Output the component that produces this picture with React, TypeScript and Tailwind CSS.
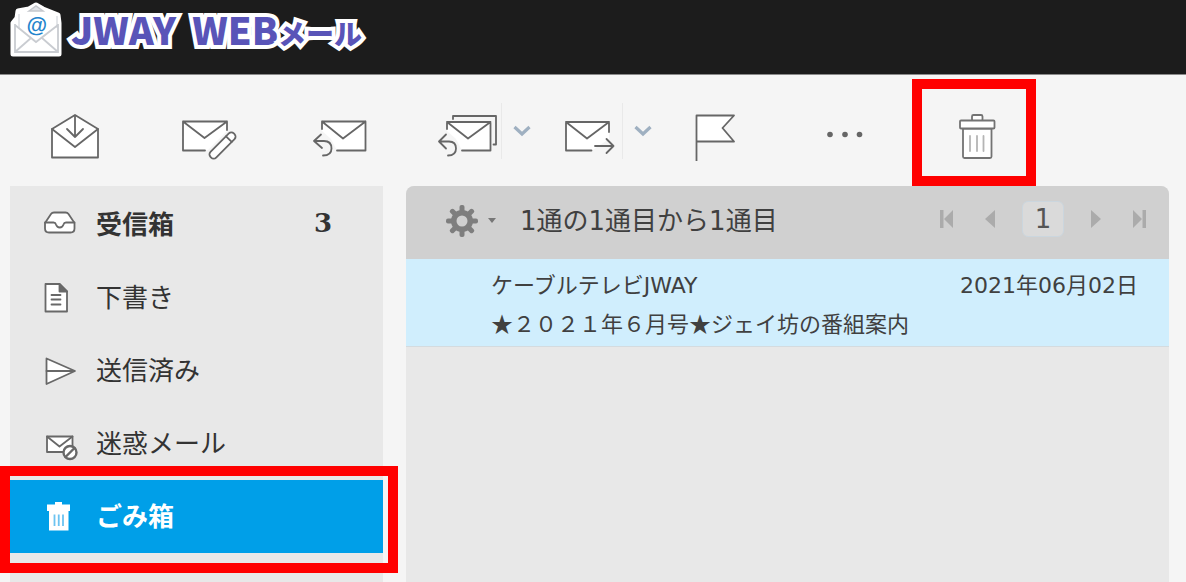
import React from "react";

type IconProps = { className?: string };

const Icon: React.FC<{ size: number; className?: string; children: React.ReactNode }> = ({ size, className, children }) => (
  <svg
    width={size}
    height={size}
    viewBox={`0 0 ${size} ${size}`}
    fill="none"
    stroke="currentColor"
    strokeWidth={1.8}
    strokeLinejoin="round"
    strokeLinecap="round"
    className={className}
    aria-hidden="true"
  >
    {children}
  </svg>
);

// Toolbar icons
const CheckMailIcon = () => (
  <Icon size={60}>
    <path d="M7 28 30 14 53 28V56.500H7Z" fill="#fff" />
    <path d="M7 28 30 46 53 28M30 15V36M22 28l8 8 8-8" />
  </Icon>
);

const ComposeIcon = () => (
  <Icon size={60}>
    <path d="M6 20.500H50V30L31 49H6Z" fill="#fff" stroke="none" />
    <path d="M50 29V20.500H6V49.500H28M6 20.500 27.500 37 50 20.500" />
    <g transform="rotate(-45 45.500 44.500)">
      <rect x="29" y="40.500" width="33" height="8" rx="3.500" fill="#fff" />
      <path d="M54.500 40.500v8" />
    </g>
  </Icon>
);

const ReplyIcon = () => (
  <Icon size={60}>
    <path d="M13 20.500H56.500V49.500H28L22 38 13 30Z" fill="#fff" stroke="none" />
    <path d="M13 28V20.500H56.500V49.500H28M13 20.500 34 37.500 56.500 20.500" />
    <path d="M12 33.500 5 40l8 7M5 40H15C20 40 22.500 43 22.500 47.500S20 54.500 14 54.500" />
  </Icon>
);

const ReplyAllIcon = () => (
  <Icon size={60}>
    <path d="M10 21H53.500V49.500H25L19 38 10 30Z" fill="#fff" stroke="none" />
    <path d="M16 18V15H59V43.500H56.500" />
    <path d="M10 28V21H53.500V49.500H25M10 21 31 37.500 53.500 21" />
    <path d="M9 33.500 2 40.500l7 7M2 40.500H12C17 40.500 19 43.500 19 47.500S17 54.500 11 54.500" />
  </Icon>
);

const ForwardIcon = () => (
  <Icon size={60}>
    <path d="M8 21H51V38L34 49.500H8Z" fill="#fff" stroke="none" />
    <path d="M51 31V21H8V49.500H33.500M8 21 29 37.500 51 21" />
    <path d="M37 45H55.500M48.500 38l7 7-7 7" />
  </Icon>
);

const FlagIcon = () => (
  <Icon size={60}>
    <path d="M11.500 60V14.500H49L37.500 27 49 40.500H11.500" fill="#fff" />
  </Icon>
);

const MoreIcon = () => (
  <Icon size={60}>
    <g fill="currentColor" stroke="none">
      <circle cx="15" cy="33.500" r="2.800" />
      <circle cx="30" cy="33.500" r="2.800" />
      <circle cx="44.500" cy="33.500" r="2.800" />
    </g>
  </Icon>
);

const DeleteIcon = () => (
  <Icon size={60} className="text-[#737373]">
    <path d="M19 27.500H47.500V55.500a1.500 1.500 0 0 1-1.500 1.500H20.500a1.500 1.500 0 0 1-1.500-1.500Z" fill="#fff" />
    <rect x="28" y="14" width="10.500" height="6" rx="1.500" fill="#fff" />
    <rect x="16" y="19.500" width="34.500" height="8" rx="1" fill="#fff" />
    <path d="M26 35V50M33 35V50M39.500 35V50" className="text-[#b5b5b5]" stroke="currentColor" />
  </Icon>
);

const ChevronIcon = () => (
  <svg width="18" height="12" viewBox="0 0 18 12" fill="none" stroke="#9fb0c1" strokeWidth={3.2} aria-hidden="true">
    <path d="M1.500 2 9 9 16.500 2" />
  </svg>
);

// Folder icons
const InboxIcon = () => (
  <Icon size={36}>
    <path d="M3 16 9 7Q10 5.500 12 5.500H23.500Q25.500 5.500 26.500 7L32.500 16V21.500Q32.500 25.500 28.500 25.500H7Q3 25.500 3 21.500Z" fill="#fff" />
    <path d="M3 15.500H11.500Q13.500 15.500 14 17.500 15 20.500 17.750 20.500T21.500 17.500Q22 15.500 24 15.500H32.500" />
  </Icon>
);

const DraftIcon = () => (
  <Icon size={36}>
    <path d="M3.500 4H17.500L25 11.500V31.500H3.500Z" fill="#fff" />
    <path d="M17.500 4V11.500H25Z" fill="currentColor" />
    <path d="M9.500 15h9M9.500 19.500h9M9.500 24.500h9" />
  </Icon>
);

const SentIcon = () => (
  <Icon size={36}>
    <path d="M4.500 5.500 33 18 4.500 31Z" fill="#fff" />
    <path d="M4.500 18H32" />
  </Icon>
);

const JunkIcon = () => (
  <Icon size={36}>
    <path d="M5 10.500H30.500V26H5Z" fill="#fff" />
    <path d="M5 10.500 17.500 20.500 30.500 10.500" />
    <circle cx="28" cy="26.500" r="6.500" fill="#fff" strokeWidth={2.400} />
    <path d="M23.500 31 32.500 22" strokeWidth={2.400} />
  </Icon>
);

const TrashIcon = () => (
  <Icon size={36}>
    <g stroke="none" fill="currentColor">
      <path d="M13 3H20V5.500H28V12H26.500V31.500H7V12H5V5.500H13Z" />
    </g>
    <path d="M12.500 15.500V27M16.750 15.500V27M21 15.500V27" stroke="#6cc3f1" strokeLinecap="butt" />
  </Icon>
);

const GearIcon = () => (
  <svg width="32" height="32" viewBox="0 0 32 32" fill="#7e7e7e" aria-hidden="true">
    {[0, 45, 90, 135].map((deg) => (
      <rect key={deg} x="13.500" y="0" width="5" height="32" rx="2" transform={`rotate(${deg} 16 16)`} />
    ))}
    <circle cx="16" cy="16" r="11" />
    <circle cx="16" cy="16" r="5.500" fill="#d0d0d0" />
  </svg>
);

const ArrowIcon: React.FC<IconProps & { bar?: boolean }> = ({ className, bar }) => (
  <svg width="16" height="20" viewBox="0 0 16 20" fill="#ababab" className={className} aria-hidden="true">
    {bar ? <path d="M1 1H4.500V19H1ZM5 10 14 1V19Z" /> : <path d="M2 10 12 1V19Z" />}
  </svg>
);

const LogoIcon = () => (
  <svg width="56" height="60" viewBox="0 0 56 60" aria-hidden="true">
    <path
      d="M5 23 9 18 10 11 21 9 28 5 35 9 50 15 51 23V54H5Z"
      fill="#fff"
      stroke="#fff"
      strokeWidth="5"
      strokeLinejoin="round"
    />
    <path d="M21 11 28 6 35 11Z" fill="#e2e4e8" stroke="#c5c8cd" strokeWidth="1.500" />
    <path d="M11 14V28M49 16V28" fill="none" stroke="#dcdee2" strokeWidth="1.500" />
    <path d="M7 24V52H50V24M7 25 28 42 50 25M7 52 23 38M50 52 34 38" fill="none" stroke="#c9ccd1" strokeWidth="1.800" />
    <text x="28.500" y="32" textAnchor="middle" fontSize="21" fontWeight="700" fill="#2484cc" className="font-['Liberation_Sans',sans-serif] italic">
      @
    </text>
  </svg>
);

const folders = [
  { label: "受信箱", icon: InboxIcon, count: 3 },
  { label: "下書き", icon: DraftIcon },
  { label: "送信済み", icon: SentIcon },
  { label: "迷惑メール", icon: JunkIcon },
  { label: "ごみ箱", icon: TrashIcon, active: true },
];

const Toolbar = () => {
  const cell = "flex shrink-0 items-center justify-center";
  const more = "flex h-[56px] w-[40px] shrink-0 items-center justify-center border-l border-[#e9e9e9]";

  return (
    <nav className="flex h-[111px] items-stretch pl-[9px] text-[#666]" aria-label="ツールバー">
      <button aria-label="受信" className={`${cell} w-[132px]`}><CheckMailIcon /></button>
      <button aria-label="作成" className={`${cell} w-[132px]`}><ComposeIcon /></button>
      <button aria-label="返信" className={`${cell} w-[132px]`}><ReplyIcon /></button>
      <div className="flex items-center">
        <button aria-label="全員に返信" className="flex w-[96px] justify-end pr-1"><ReplyAllIcon /></button>
        <button aria-label="返信オプション" className={more}><ChevronIcon /></button>
      </div>
      <div className="flex items-center">
        <button aria-label="転送" className="flex w-[81px] justify-end pr-1"><ForwardIcon /></button>
        <button aria-label="転送オプション" className={more}><ChevronIcon /></button>
      </div>
      <button aria-label="フラグ" className={`${cell} w-[105px]`}><FlagIcon /></button>
      <button aria-label="その他" className={`${cell} w-[145px] pl-[11px]`}><MoreIcon /></button>
      <button aria-label="削除" className={`${cell} relative w-[124px]`}>
        <DeleteIcon />
        <span className="pointer-events-none absolute inset-x-0 top-1 bottom-0 border-[10px] border-[#ff0000]" />
      </button>
    </nav>
  );
};

const Sidebar = () => (
  <aside className="w-[373px] shrink-0 bg-[#e8e8e8] pt-[2px]">
    <ul>
      {folders.map(({ label, icon: FolderIcon, count, active }) => (
        <li key={label} className="relative">
          <a
            href="#"
            className={`flex h-[73px] items-center gap-[18px] pr-[51px] pl-8 text-[26px] leading-8 ${
              active ? "bg-[#009fe8] font-bold text-white" : "text-[#333]"
            } ${count ? "font-bold" : ""}`}
          >
            <span className={active ? "text-white" : "text-[#686868]"}>
              <FolderIcon />
            </span>
            <span className="flex-1">{label}</span>
            {count && <span className="pb-1 font-['DejaVu_Serif',serif]">{count}</span>}
          </a>
          {active && (
            <span className="pointer-events-none absolute -top-[14px] -right-[15px] -bottom-5 -left-[10px] border-[10px] border-[#ff0000]" />
          )}
        </li>
      ))}
    </ul>
  </aside>
);

const MessageList = () => (
  <main className="min-w-0 flex-1 rounded-t-lg bg-[#e8e8e8] text-[#404040]">
    <div className="flex h-[73px] items-center rounded-t-lg bg-[#d0d0d0] pr-[22px] pb-1 pl-10">
      <button aria-label="一覧の設定" className="flex items-center gap-[10px]">
        <GearIcon />
        <svg width="8" height="6" viewBox="0 0 8 6" fill="#777" aria-hidden="true">
          <path d="M0 0H8L4 5Z" />
        </svg>
      </button>
      <h2 className="ml-6 flex-1 text-[26px] leading-8">1通の1通目から1通目</h2>
      <div className="flex items-center gap-[23px] pb-1">
        <button aria-label="最初のページ" className="w-[21px]"><ArrowIcon bar /></button>
        <button aria-label="前のページ"><ArrowIcon /></button>
        <input
          aria-label="ページ"
          defaultValue="1"
          className="h-9 w-[42px] rounded-md border border-[#cbd6de] bg-[#dadada] text-center text-[26px] leading-8 text-[#555]"
        />
        <button aria-label="次のページ"><ArrowIcon className="rotate-180" /></button>
        <button aria-label="最後のページ" className="flex w-[21px] justify-end"><ArrowIcon bar className="rotate-180" /></button>
      </div>
    </div>
    <ul>
      <li className="border-b border-[#d4dbdf] bg-[#d0eefd]">
        <a href="#" className="block pt-[9px] pr-[31px] pb-[6px] pl-[85px] text-[22px] leading-9">
          <span className="flex justify-between">
            <span>ケーブルテレビJWAY</span>
            <time dateTime="2021-06-02">2021年06月02日</time>
          </span>
          <span className="block font-['Noto_Sans_CJK_JP',sans-serif]">★２０２１年６月号★ジェイ坊の番組案内</span>
        </a>
      </li>
    </ul>
  </main>
);

const App: React.FC = () => {
  return (
    <div
      lang="ja"
      className="flex min-h-screen flex-col overflow-hidden bg-[#f5f5f5] font-['DejaVu_Sans','Noto_Sans_CJK_JP',sans-serif]"
    >
      <header className="flex h-[75px] items-start border-b border-[#8a8a8a] bg-[#1c1c1c] pl-2">
        <LogoIcon />
        <h1 className="flex items-baseline pl-[7px] font-['Noto_Sans_CJK_JP',sans-serif] text-[38px] leading-[58px] font-black text-[#5954b8] [-webkit-text-stroke:8px_#fff] [paint-order:stroke_fill] [stroke-linejoin:round]">
          <span>JWAY</span>
          <span className="ml-4">WEB</span>
          <span className="text-[28px]">メール</span>
        </h1>
      </header>
      <Toolbar />
      <div className="flex flex-1 gap-[23px] pr-[17px] pl-[10px]">
        <Sidebar />
        <MessageList />
      </div>
    </div>
  );
};

export default App;
